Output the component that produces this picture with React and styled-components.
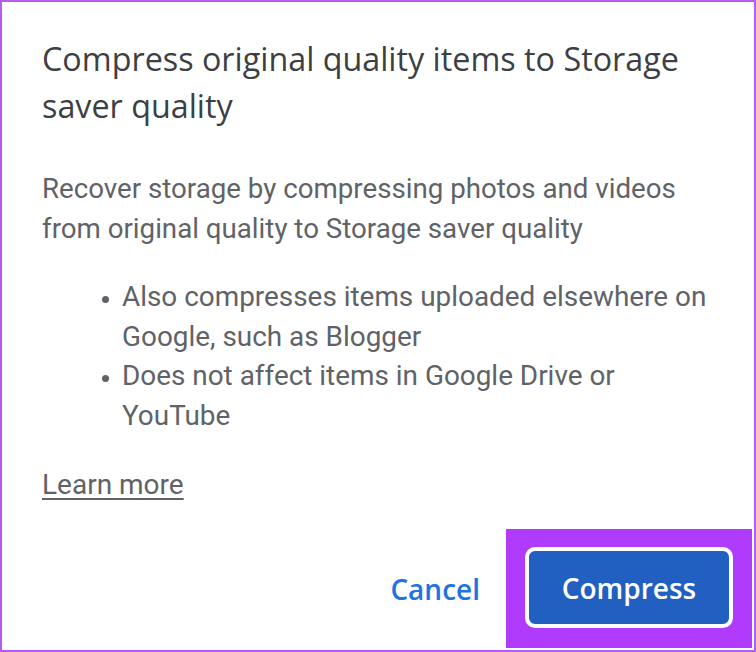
import React from "react"
import { styled, createGlobalStyle } from "styled-components"

const GlobalStyle = createGlobalStyle`
    html, body {
        margin: 0;
        padding: 0;
        background: #ffffff;
    }
`

const App = () => {

    return (
        <>
            <GlobalStyle />
            <Frame>
                <Dialog>
                    <Title>Compress original quality items to Storage saver quality</Title>
                    <Body>Recover storage by compressing photos and videos from original quality to Storage saver quality</Body>
                    <List>
                        <Item>Also compresses items uploaded elsewhere on Google, such as Blogger</Item>
                        <Item>Does not affect items in Google Drive or YouTube</Item>
                    </List>
                    <LearnMore>Learn more</LearnMore>
                </Dialog>
                <Footer>
                    <TextButton>Cancel</TextButton>
                    <Highlight>
                        <PrimaryButton>Compress</PrimaryButton>
                    </Highlight>
                </Footer>
            </Frame>
        </>
    )
}

const Frame = styled.div`
    box-sizing: border-box;
    width: 756px;
    height: 652px;
    border: 2px solid #b65cf2;
    background: #ffffff;
    display: flex;
    flex-direction: column;
    justify-content: space-between;
`

const Dialog = styled.div`
    padding: 33px 30px 0 40px;
    display: flex;
    flex-direction: column;
`

const Title = styled.h1`
    margin: 0;
    font-family: "Open Sans", "Roboto", sans-serif;
    font-size: 32.3px;
    font-weight: 400;
    line-height: 47px;
    color: #3c4043;
`

const Body = styled.p`
    margin: 40px 0 0 0;
    font-family: "Roboto", sans-serif;
    font-size: 27.7px;
    line-height: 40px;
    color: #5f6368;
`

const List = styled.ul`
    margin: 28px 0 0 0;
    padding: 0 0 0 80px;
    font-family: "Roboto", sans-serif;
    font-size: 27.9px;
    line-height: 39.6px;
    color: #5f6368;
`

const Item = styled.li`
    &::marker {
        font-size: 22px;
    }
`

const LearnMore = styled.a`
    align-self: flex-start;
    margin-top: 30px;
    font-family: "Roboto", sans-serif;
    font-size: 28px;
    line-height: 40px;
    color: #5f6368;
    text-decoration: underline;
    text-decoration-thickness: 2px;
    text-underline-offset: 4px;
    cursor: pointer;
`

const Footer = styled.div`
    display: flex;
    justify-content: flex-end;
    align-items: center;
    padding: 0 2px 2px 0;
    gap: 26px;
`

const TextButton = styled.button`
    border: none;
    background: none;
    padding: 0;
    font-family: "Open Sans", "Roboto", sans-serif;
    font-size: 28px;
    font-weight: 600;
    color: #1f74e0;
    cursor: pointer;
`

const Highlight = styled.div`
    background: #b13bfc;
    padding: 18px 19px 20px 19px;
    display: flex;
`

const PrimaryButton = styled.button`
    box-sizing: border-box;
    width: 208px;
    height: 81px;
    border: 4px solid #ffffff;
    border-radius: 10px;
    background: #2160c0;
    color: #ffffff;
    font-family: "Open Sans", "Roboto", sans-serif;
    font-size: 28px;
    font-weight: 600;
    cursor: pointer;
`

export default App
